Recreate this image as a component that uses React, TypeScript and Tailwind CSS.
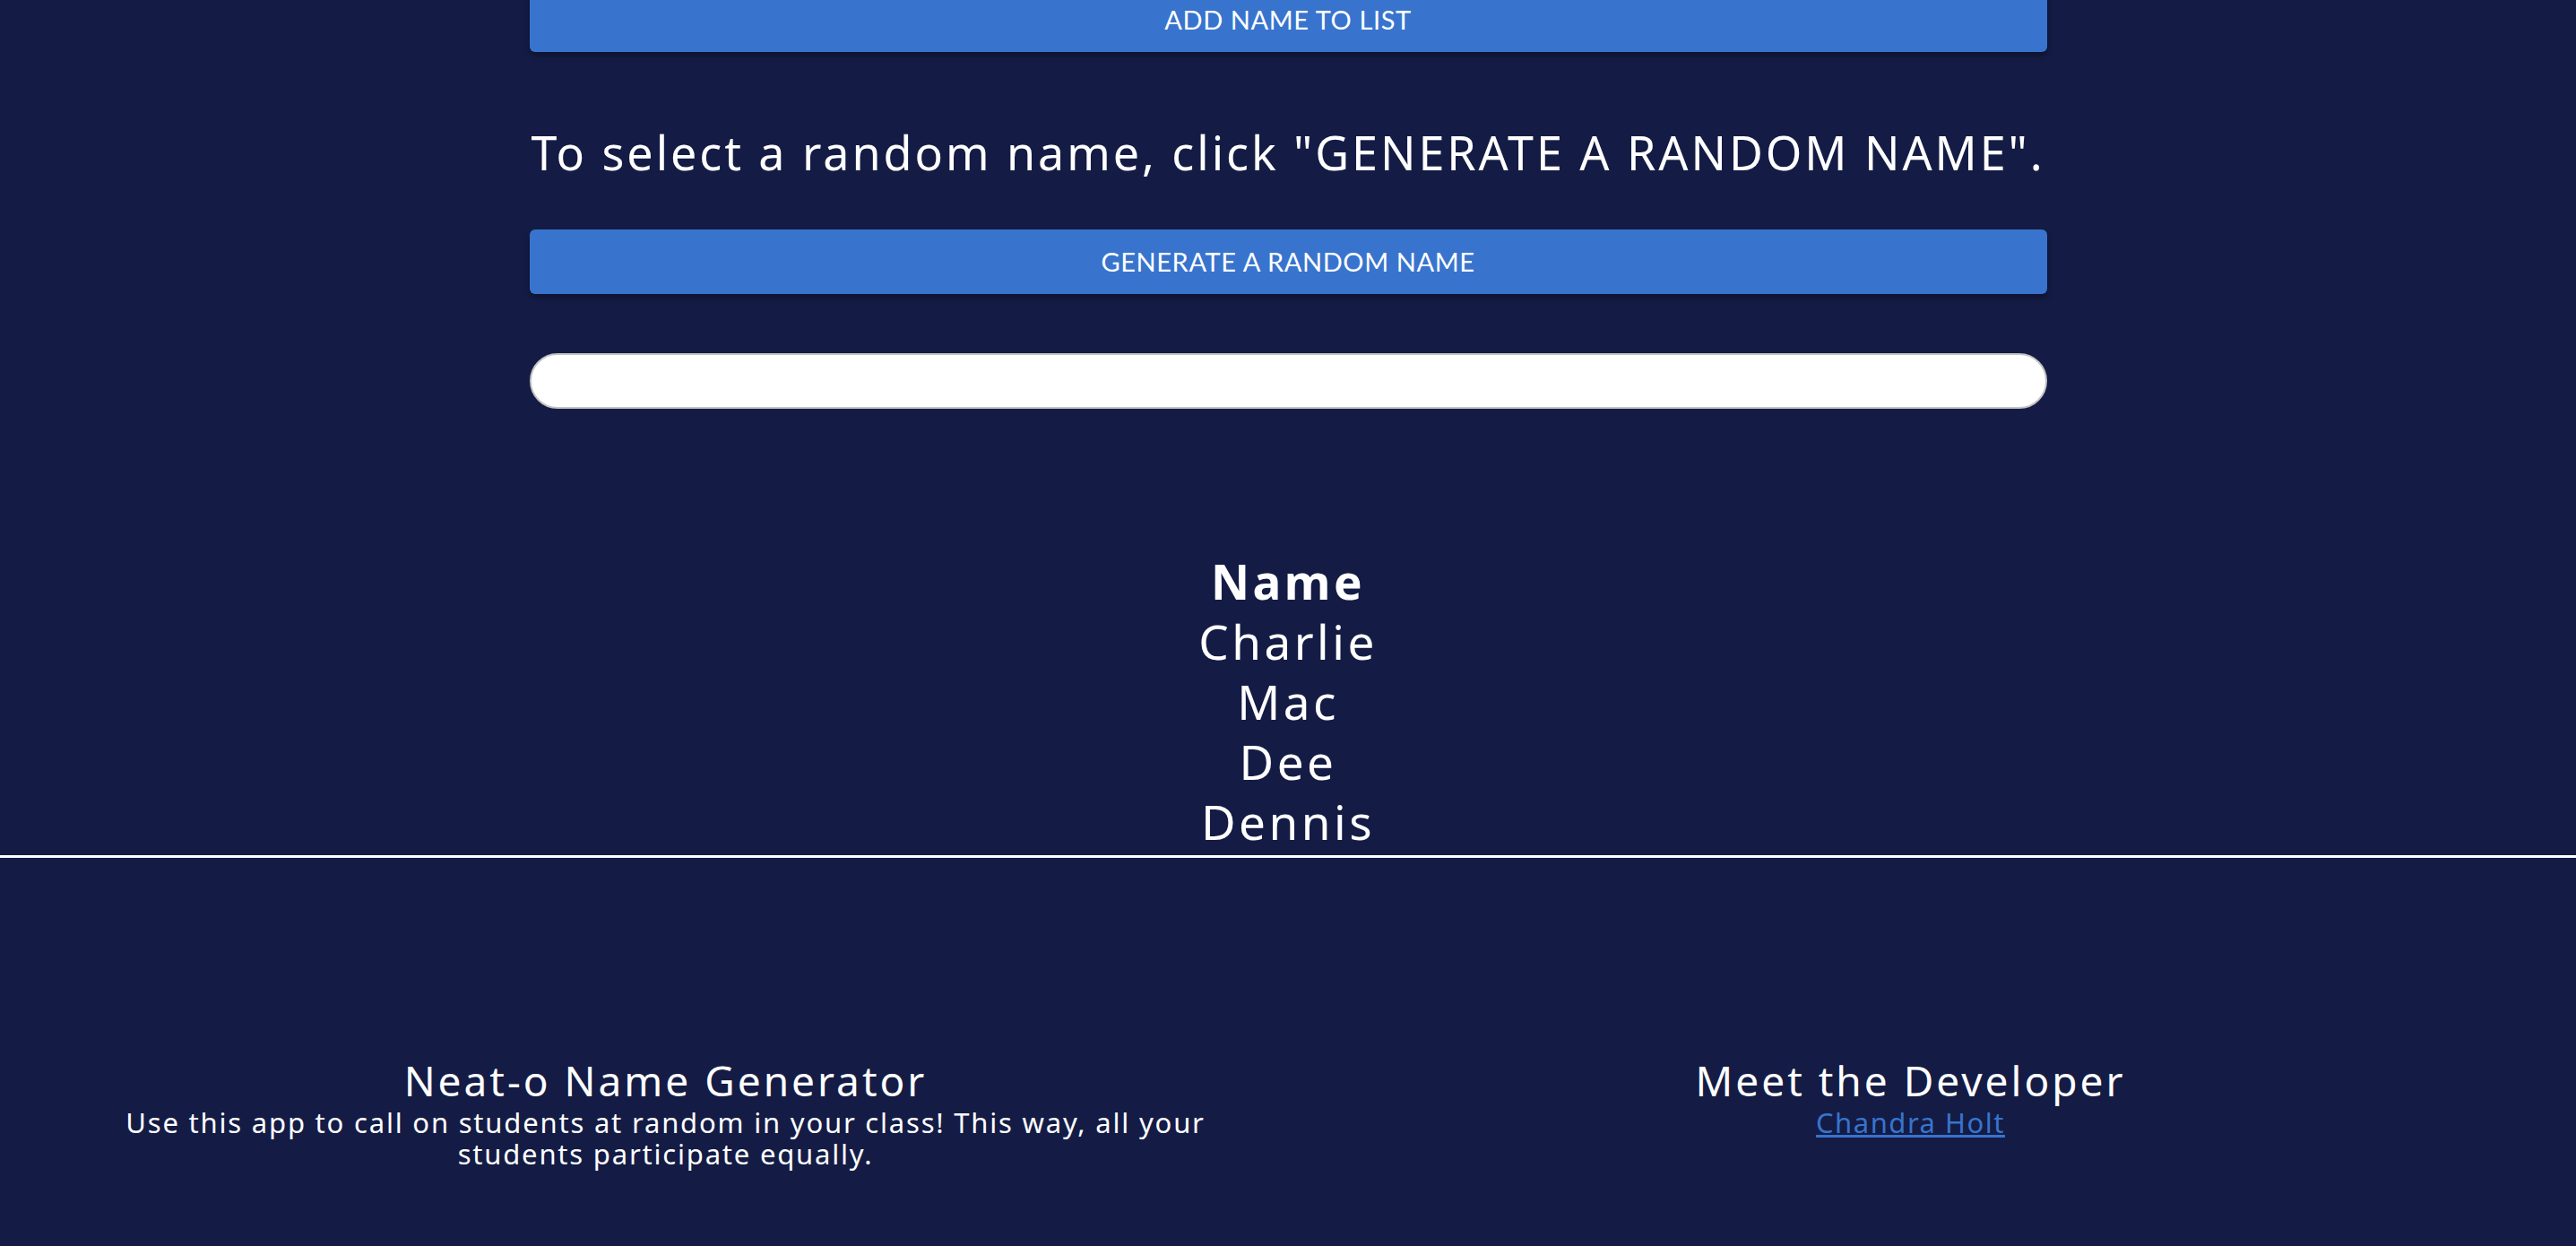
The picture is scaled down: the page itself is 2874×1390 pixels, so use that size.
import React, { useState } from "react";

const names = ["Charlie", "Mac", "Dee", "Dennis"];

export default function App() {
	const [picked, setPicked] = useState("");

	const pickName = () => {
		setPicked(names[Math.floor(Math.random() * names.length)]);
	};

	return (
		<div className="min-h-[1390px] w-full overflow-hidden bg-[#141c45] text-white font-['Noto_Sans',sans-serif]">
			{/* Form area */}
			<div className="mx-auto w-[1693px] -mt-[14px]">
				<button className="h-[72px] w-full rounded-[6px] bg-[#3874cd] text-[29px] tracking-[0.6px] text-white shadow-[0_4px_6px_rgba(0,0,0,0.35)] font-['Lato',sans-serif]">
					ADD NAME TO LIST
				</button>

				<h2 className="mt-[72px] whitespace-nowrap text-center text-[52px] leading-[80px] tracking-[2.95px]">
					To select a random name, click "GENERATE A RANDOM NAME".
				</h2>

				<button
					onClick={pickName}
					className="mt-[46px] h-[72px] w-full rounded-[6px] bg-[#3874cd] text-[29px] tracking-[0.6px] text-white shadow-[0_4px_6px_rgba(0,0,0,0.35)] font-['Lato',sans-serif]"
				>
					GENERATE A RANDOM NAME
				</button>

				<input
					value={picked}
					readOnly
					className="mt-[66px] block h-[62px] w-full rounded-full border-2 border-[#c4c4c4] bg-white px-6 text-[28px] text-black outline-none"
				/>
			</div>

			{/* Names table */}
			<table className="mx-auto mt-[159px] text-center text-[53px] leading-[67px] tracking-[3.5px]">
				<thead>
					<tr>
						<th className="font-bold">Name</th>
					</tr>
				</thead>
				<tbody>
					{names.map((n) => (
						<tr key={n}>
							<td>{n}</td>
						</tr>
					))}
				</tbody>
			</table>

			<hr className="mt-[4px] border-t-[3px] border-white" />

			{/* Footer */}
			<footer className="mt-[222px] grid grid-cols-2 px-[48px] text-center">
				<div className="px-[60px]">
					<h3 className="text-[46px] leading-[52px] tracking-[3px]">Neat-o Name Generator</h3>
					<p className="mt-[4px] text-[31px] leading-[35px] tracking-[1.8px]">
						Use this app to call on students at random in your class! This way, all your students participate equally.
					</p>
				</div>
				<div>
					<h3 className="text-[46px] leading-[52px] tracking-[3px]">Meet the Developer</h3>
					<a href="#" className="mt-[4px] inline-block text-[31px] leading-[35px] tracking-[1.5px] text-[#3874cd] underline">
						Chandra Holt
					</a>
				</div>
			</footer>
		</div>
	);
}
